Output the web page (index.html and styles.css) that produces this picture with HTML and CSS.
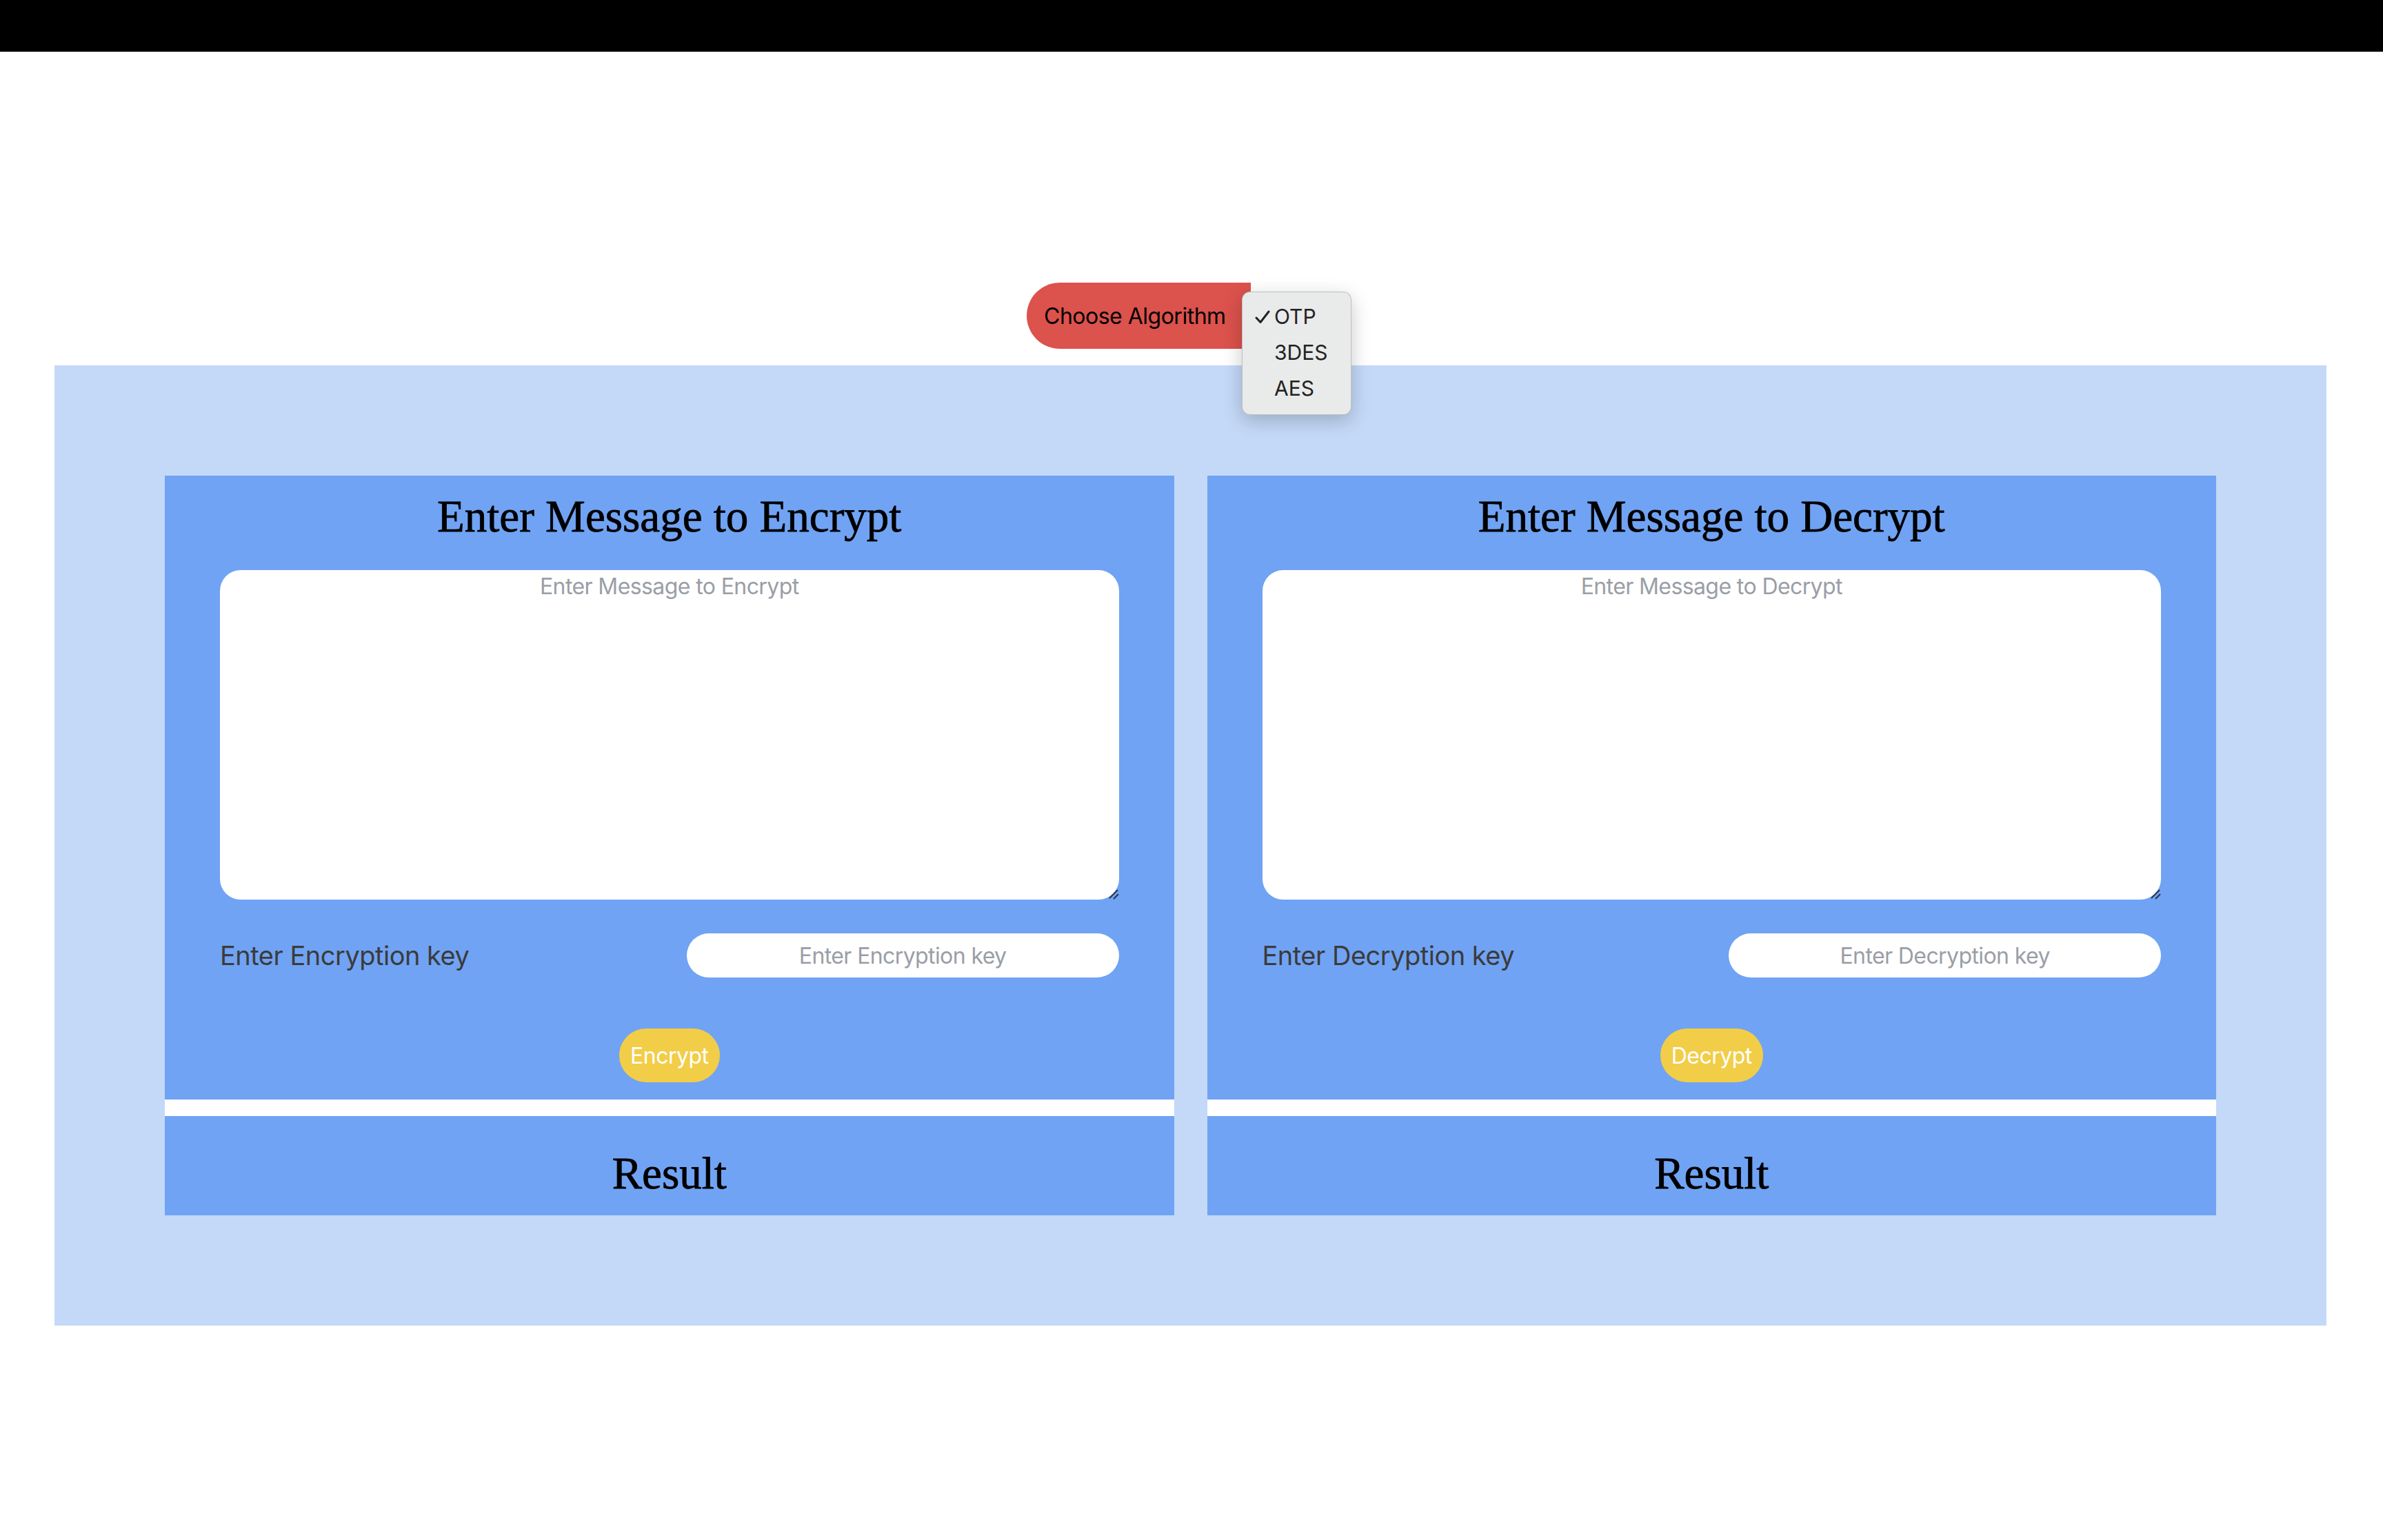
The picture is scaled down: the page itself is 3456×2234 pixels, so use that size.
FILE: index.html
```html
<html>
<head>
    <title>Encryption Playground</title>
<link rel="stylesheet" href="styles.css">
</head>
<body>

<div class="topbar"></div>

<div class="picker-row">
  <div class="picker">
    <span class="picker-label">Choose Algorithm</span>
    <div class="picker-select">
      <ul class="menu">
        <li><svg class="check" width="22" height="20" viewBox="0 0 22 20"><path d="M2 11 L8 17.5 L20 2" stroke="#222" stroke-width="3" fill="none" stroke-linecap="round" stroke-linejoin="round"/></svg>OTP</li>
        <li>3DES</li>
        <li>AES</li>
      </ul>
    </div>
  </div>
</div>

<div class="board">

  <div class="column">
    <div class="card">
      <h2 class="card-title">Enter Message to Encrypt</h2>
      <div class="message-box">
        <textarea class="message" placeholder="Enter Message to Encrypt"></textarea>
        <svg class="grip" width="18" height="18" viewBox="0 0 18 18"><path d="M16 4 L4 16 M17 10 L10 17" stroke="#2b3548" stroke-width="2" fill="none"/></svg>
      </div>
      <div class="key-row">
        <label class="key-label">Enter Encryption key</label>
        <input class="key-input" type="text" placeholder="Enter Encryption key">
      </div>
      <div class="actions">
        <button class="go">Encrypt</button>
      </div>
    </div>
    <div class="result">
      <h2 class="card-title">Result</h2>
    </div>
  </div>

  <div class="column">
    <div class="card">
      <h2 class="card-title">Enter Message to Decrypt</h2>
      <div class="message-box">
        <textarea class="message" placeholder="Enter Message to Decrypt"></textarea>
        <svg class="grip" width="18" height="18" viewBox="0 0 18 18"><path d="M16 4 L4 16 M17 10 L10 17" stroke="#2b3548" stroke-width="2" fill="none"/></svg>
      </div>
      <div class="key-row">
        <label class="key-label">Enter Decryption key</label>
        <input class="key-input" type="text" placeholder="Enter Decryption key">
      </div>
      <div class="actions">
        <button class="go">Decrypt</button>
      </div>
    </div>
    <div class="result">
      <h2 class="card-title">Result</h2>
    </div>
  </div>

</div>

</body>
</html>
```

FILE: styles.css
```css
body {
    margin: 0;
    background-color: white;
    font-family: Inter, "Liberation Sans", sans-serif;
    letter-spacing: -0.5px;
}

.topbar {
    height: 75px;
    background-color: black;
}

.picker-row {
    display: flex;
    justify-content: center;
    padding-top: 335px;
    margin-bottom: 24px;
}

.picker {
    display: flex;
    height: 96px;
}

.picker-label {
    display: flex;
    align-items: center;
    box-sizing: border-box;
    width: 325px;
    padding-left: 25px;
    background-color: #dc524c;
    border-radius: 48px 0 0 48px;
    font-size: 32px;
    color: black;
}

.picker-select {
    position: relative;
    width: 153px;
    background-color: white;
}

/* the open popup of the select */
.menu {
    position: absolute;
    left: -13px;
    top: 13px;
    width: 159px;
    box-sizing: border-box;
    margin: 0;
    padding: 9px 0 12px 0;
    list-style: none;
    background-color: #e9eaea;
    border: 1px solid rgba(0, 0, 0, 0.18);
    border-radius: 12px;
    box-shadow: 0 8px 28px rgba(0, 0, 0, 0.22);
}

.menu li {
    position: relative;
    height: 52px;
    line-height: 52px;
    padding-left: 46px;
    font-size: 30px;
    letter-spacing: 0;
    color: #222;
}

.check {
    position: absolute;
    left: 18px;
    top: 17px;
}

.board {
    display: grid;
    grid-template-columns: 1fr 1fr;
    gap: 48px;
    margin: 0 82px 0 79px;
    padding: 160px;
    background-color: #c4d9f8;
}

.column {
    display: flex;
    flex-direction: column;
    gap: 24px;
    background-color: white;
}

.card {
    display: flex;
    flex-direction: column;
    padding: 24px 80px 25px 80px;
    background-color: #70a3f3;
}

.card-title {
    margin: 0;
    font-family: "Liberation Serif", serif;
    font-weight: normal;
    font-size: 65px;
    line-height: 71px;
    letter-spacing: 0;
    text-align: center;
    color: black;
    -webkit-text-stroke: 0.8px black;
}

.message-box {
    position: relative;
    display: flex;
    margin-top: 42px;
}

.message {
    flex: 1;
    height: 478px;
    padding: 4px 20px;
    border: none;
    border-radius: 30px;
    background-color: white;
    font-family: Inter, "Liberation Sans", sans-serif;
    font-size: 32px;
    letter-spacing: -0.6px;
    text-align: center;
    box-sizing: border-box;
    outline: none;
    resize: none;
}

.grip {
    position: absolute;
    right: 0;
    bottom: 0;
}

.message::placeholder,
.key-input::placeholder {
    color: #9a9ea6;
}

.key-row {
    display: grid;
    grid-template-columns: 1fr 1fr;
    gap: 50px;
    align-items: center;
    margin-top: 49px;
}

.key-label {
    font-size: 38px;
    color: #3b3b3b;
}

.key-input {
    height: 64px;
    border: none;
    border-radius: 32px;
    background-color: white;
    font-family: Inter, "Liberation Sans", sans-serif;
    font-size: 32px;
    letter-spacing: -0.6px;
    text-align: center;
    outline: none;
}

.actions {
    display: flex;
    justify-content: center;
    margin-top: 74px;
}

.go {
    height: 78px;
    padding: 0 16px;
    border: none;
    border-radius: 40px;
    background-color: #f2cd48;
    font-family: Inter, "Liberation Sans", sans-serif;
    font-size: 32px;
    letter-spacing: -0.5px;
    color: white;
}

.result {
    padding: 48px 0 25px 0;
    background-color: #70a3f3;
}
```
